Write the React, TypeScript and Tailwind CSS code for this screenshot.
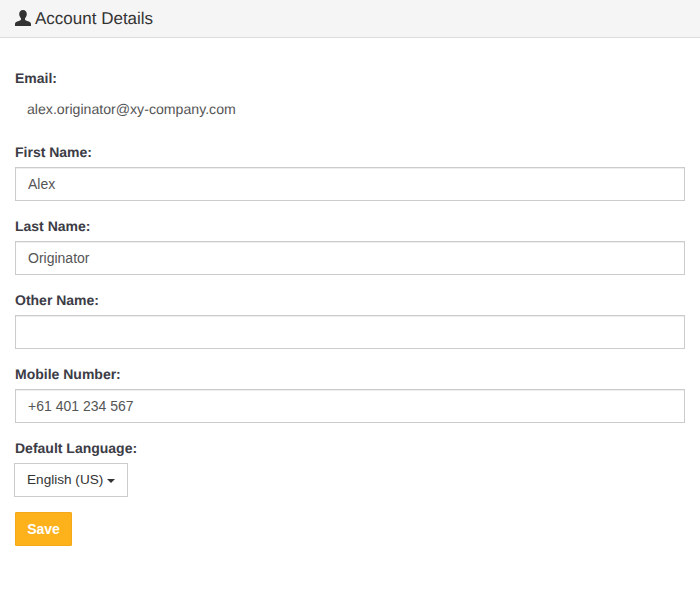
const fontStack = "font-['Liberation_Sans',Arial,sans-serif] [text-rendering:geometricPrecision]";

type FieldProps = {
  label: string;
  value: string;
};

const Field = ({ label, value }: FieldProps) => {
  return (
    <div className="mb-[15px]">
      <label className="block mb-[5px] h-5 text-sm leading-5 font-bold text-[#3c3c46]">{label}</label>
      <input
        readOnly
        value={value}
        className="block w-full h-[34px] px-3 text-sm text-[#555555] bg-white border border-[#cccccc] shadow-[inset_0_1px_1px_rgba(0,0,0,0.075)] outline-none"
      />
    </div>
  );
};

const App = () => {
  return (
    <div className={`${fontStack} min-h-[591px] bg-white`}>
      <header className="flex items-center h-[38px] pl-[15px] bg-[#f5f5f5] border-b border-[#dddddd] text-[#333333]">
        <svg width="16" height="16" viewBox="0 0 16 16" className="mr-1 -mt-0.5 fill-[#333333]">
          <path d="M8 0C5.600 0 4.200 1.700 4.200 4.100c0 1.700.7 3.200 1.700 4.100.2.3.2 1 0 1.500-.3.6-1.500 1-3 1.600C1.200 12 0 12.700 0 13.900V16h16v-2.100c0-1.200-1.200-1.900-2.900-2.600-1.500-.6-2.700-1-3-1.600-.2-.5-.2-1.200 0-1.500 1-.9 1.700-2.400 1.700-4.100C11.800 1.700 10.400 0 8 0z" />
        </svg>
        <h1 className="text-[17px] leading-[18px] font-normal">Account Details</h1>
      </header>

      <form className="px-[15px] pt-[30px]">
        <div className="mb-[15px]">
          <label className="block mb-[5px] h-5 text-sm leading-5 font-bold text-[#3c3c46]">Email:</label>
          <p className="px-3 pt-[6px] pb-2 h-[34px] text-[14.14px] leading-5 text-[#555555]">alex.originator@xy-company.com</p>
        </div>
        <Field label="First Name:" value="Alex" />
        <Field label="Last Name:" value="Originator" />
        <Field label="Other Name:" value="" />
        <Field label="Mobile Number:" value="+61 401 234 567" />

        <div className="mb-[15px]">
          <label className="block mb-[5px] h-5 text-sm leading-5 font-bold text-[#3c3c46]">Default Language:</label>
          <button
            type="button"
            className="flex items-center h-[34px] w-[114px] -ml-px px-3 text-[13.6px] leading-5 whitespace-nowrap text-[#333333] bg-white border border-[#cccccc]"
          >
            English (US)
            <span className="ml-1 mt-px w-0 h-0 border-x-4 border-x-transparent border-t-4 border-t-[#333333]" />
          </button>
        </div>

        <button
          type="button"
          className="block h-[34px] w-[57px] text-sm font-bold text-white bg-[#fdb11b] border border-[#f5a81a] rounded-[1px]"
        >
          Save
        </button>
      </form>
    </div>
  );
};

export default App;
